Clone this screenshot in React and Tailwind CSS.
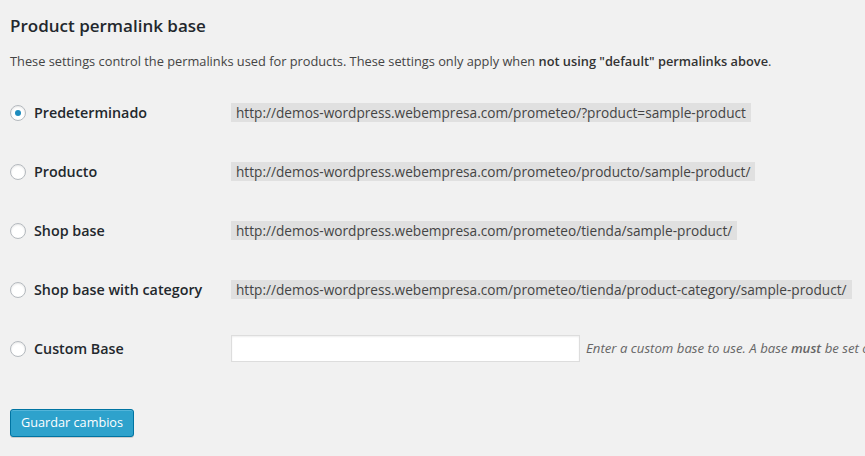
const rows = [
  { label: 'Predeterminado', url: 'http://demos-wordpress.webempresa.com/prometeo/?product=sample-product', checked: true },
  { label: 'Producto', url: 'http://demos-wordpress.webempresa.com/prometeo/producto/sample-product/' },
  { label: 'Shop base', url: 'http://demos-wordpress.webempresa.com/prometeo/tienda/sample-product/' },
  { label: 'Shop base with category', url: 'http://demos-wordpress.webempresa.com/prometeo/tienda/product-category/sample-product/' },
]

function Radio({ checked }) {
  return (
    <span className="w-4 h-4 shrink-0 rounded-full border border-[#b4b9be] bg-white shadow-[inset_0_1px_2px_rgba(0,0,0,0.1)] flex items-center justify-center">
      {checked && <span className="w-[6px] h-[6px] rounded-full bg-[#1e8cbe]" />}
    </span>
  )
}

function Row({ label, checked, children }) {
  return (
    <div className="h-[59px] flex items-center">
      <div className="w-[221px] shrink-0 flex items-center gap-2">
        <Radio checked={checked} />
        <span className="text-[14.3px] font-semibold text-[#23282d]">{label}</span>
      </div>
      {children}
    </div>
  )
}

export default function App() {
  return (
    <div
      className="w-[865px] h-[456px] overflow-hidden bg-[#f1f1f1] px-[10px] whitespace-nowrap text-[#444]"
      style={{ fontFamily: '"Open Sans", sans-serif' }}
    >
      <h2 className="pt-[14px] text-[17px] leading-[23px] font-semibold text-[#23282d]">Product permalink base</h2>
      <p className="mt-[14px] text-[12.8px] leading-[20px]">
        These settings control the permalinks used for products. These settings only apply when{' '}
        <strong className="font-semibold text-[#333]">not using "default" permalinks above</strong>.
      </p>
      <div className="mt-[12px]">
        {rows.map((r) => (
          <Row key={r.label} label={r.label} checked={r.checked}>
            <code className="text-[13.65px] leading-[14px] bg-[rgba(0,0,0,0.07)] pt-[3px] pb-[2px] px-[5px] text-[#444]" style={{ fontFamily: '"Open Sans", sans-serif' }}>
              {r.url}
            </code>
          </Row>
        ))}
        <Row label="Custom Base">
          <div className="w-[349px] h-[27px] shrink-0 bg-white border border-[#ddd] shadow-[inset_0_1px_2px_rgba(0,0,0,0.07)]" />
          <span className="ml-[6px] text-[13.2px] italic text-[#666]">
            Enter a custom base to use. A base <strong className="font-semibold">must</strong> be set or WordPress will use default instead.
          </span>
        </Row>
      </div>
      <button className="mt-[31px] h-[28px] px-[10px] rounded-[3px] bg-[#2ea2cc] border border-[#0074a2] text-white text-[12.7px] shadow-[inset_0_1px_0_rgba(120,200,230,0.5),0_1px_0_rgba(0,0,0,0.15)]">
        Guardar cambios
      </button>
    </div>
  )
}
